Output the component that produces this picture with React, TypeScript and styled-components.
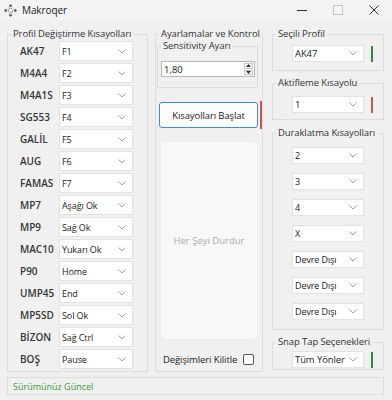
import styled, { createGlobalStyle } from "styled-components";

const GlobalStyle = createGlobalStyle`
  html, body {
    margin: 0;
    padding: 0;
    background: #f0f0f0;
  }
  body {
    font-family: "Open Sans", "Noto Sans", sans-serif;
    color: #222;
  }
`;

const Window = styled.div`
  width: 392px;
  height: 400px;
  background: #f0f0f0;
  overflow: hidden;
`;

const TitleBar = styled.div`
  height: 20px;
  display: flex;
  align-items: center;
  background: #f3f3f3;
  padding-left: 4px;
`;

const AppTitle = styled.span`
  margin-left: 5px;
  font-size: 10px;
  letter-spacing: -0.1px;
  color: #222;
`;

const Controls = styled.div`
  margin-left: auto;
  display: flex;
  align-items: center;
`;

const ControlButton = styled.div`
  width: 36px;
  height: 20px;
  display: flex;
  align-items: center;
  justify-content: center;
`;

const Main = styled.div`
  display: flex;
  align-items: flex-start;
  padding: 8px 0 0 7px;
`;

const Group = styled.fieldset<{ $w: number; $h?: number; $mt?: number; $ml?: number }>`
  box-sizing: border-box;
  width: ${({ $w }) => $w}px;
  ${({ $h }) => ($h ? `height: ${$h}px;` : "")}
  margin: ${({ $mt }) => $mt ?? 0}px 0 0 ${({ $ml }) => $ml ?? 0}px;
  padding: 0;
  border: 1px solid #dcdcdc;
  min-inline-size: 0;
`;

const Caption = styled.legend`
  margin-left: 3px;
  padding: 0 2px;
  font-size: 9.5px;
  letter-spacing: -0.1px;
  line-height: 12px;
  color: #333;
  white-space: nowrap;
`;

const Body = styled.div<{ $p: string }>`
  padding: ${({ $p }) => $p};
  display: flex;
  flex-direction: column;
`;

const ProfileRows = styled.div`
  display: flex;
  flex-direction: column;
  gap: 2px;
`;

const Row = styled.div`
  display: grid;
  grid-template-columns: 39px 74px;
  align-items: center;
  height: 20px;
`;

const WeaponLabel = styled.span`
  font-size: 10px;
  font-weight: 600;
  color: #363636;
  white-space: nowrap;
`;

const ComboBox = styled.div<{ $w: number; $h: number; $fs: number }>`
  box-sizing: border-box;
  width: ${({ $w }) => $w}px;
  height: ${({ $h }) => $h}px;
  background: #fff;
  border: 1px solid #e2e2e2;
  display: flex;
  align-items: center;
  padding: 0 6px 0 2px;
  font-size: ${({ $fs }) => $fs}px;
  letter-spacing: -0.1px;
  color: #222;
`;

const ComboValue = styled.span`
  flex: 1;
  white-space: nowrap;
  overflow: hidden;
`;

const Chevron = () => (
  <svg width="8" height="5" viewBox="0 0 8 5">
    <polyline points="0.5,0.5 4,4 7.5,0.5" fill="none" stroke="#9a9a9a" strokeWidth="0.9" />
  </svg>
);

function Combo({ value, w, h, fs = 9 }: { value: string; w: number; h: number; fs?: number }) {
  return (
    <ComboBox $w={w} $h={h} $fs={fs}>
      <ComboValue>{value}</ComboValue>
      <Chevron />
    </ComboBox>
  );
}

const NumericBox = styled.div`
  box-sizing: border-box;
  width: 94px;
  height: 16px;
  background: #fff;
  border: 1px solid #b9b9b9;
  display: flex;
  align-items: center;
  padding: 0 1px 0 2px;
  font-size: 9.5px;
`;

const Spinner = styled.div`
  width: 9px;
  height: 12px;
  display: flex;
  flex-direction: column;
  gap: 1px;
`;

const SpinPart = styled.div`
  flex: 1;
  border: 1px solid #c8c8c8;
  display: flex;
  align-items: center;
  justify-content: center;
`;

const ActionRow = styled.div`
  display: flex;
  align-items: center;
  gap: 2px;
  margin: 13px 0 0 2px;
`;

const StartButton = styled.div`
  box-sizing: border-box;
  width: 100px;
  height: 26px;
  border: 1px solid #3d8fc6;
  border-radius: 3px;
  background: #fcfcfc;
  display: flex;
  align-items: center;
  justify-content: center;
  font-size: 9.5px;
  letter-spacing: -0.1px;
  color: #222;
`;

const Indicator = styled.div<{ $color: string; $h: number }>`
  width: 2px;
  height: ${({ $h }) => $h}px;
  background: ${({ $color }) => $color};
`;

const StopButton = styled.div`
  box-sizing: border-box;
  width: 98px;
  height: 199px;
  margin: 12px 0 0 3px;
  border-radius: 4px;
  background: #f8f8f8;
  border: 1px solid #ededed;
  display: flex;
  align-items: center;
  justify-content: center;
  font-size: 9.5px;
  color: #acacac;
`;

const LockRow = styled.div`
  display: flex;
  align-items: center;
  height: 14px;
  margin: 12px 0 0 6px;
  font-size: 9.5px;
  letter-spacing: -0.1px;
  color: #222;
`;

const CheckBox = styled.span`
  box-sizing: border-box;
  width: 11px;
  height: 11px;
  margin-left: 6px;
  border: 1px solid #555;
  border-radius: 2px;
  background: #fff;
`;

const RightColumn = styled.div`
  display: flex;
  flex-direction: column;
  margin-left: 9px;
`;

const IndicatorRow = styled.div`
  display: flex;
  align-items: center;
  gap: 7px;
`;

const StackList = styled.div`
  display: flex;
  flex-direction: column;
  gap: 9px;
`;

const Footer = styled.div`
  box-sizing: border-box;
  width: 377px;
  height: 18px;
  margin: 5px 0 0 7px;
  border: 1px solid #dcdcdc;
  display: flex;
  align-items: center;
  padding-left: 5px;
  font-size: 9px;
  color: #3a9a3a;
`;

const profiles: [string, string][] = [
  ["AK47", "F1"],
  ["M4A4", "F2"],
  ["M4A1S", "F3"],
  ["SG553", "F4"],
  ["GALİL", "F5"],
  ["AUG", "F6"],
  ["FAMAS", "F7"],
  ["MP7", "Aşağı Ok"],
  ["MP9", "Sağ Ok"],
  ["MAC10", "Yukarı Ok"],
  ["P90", "Home"],
  ["UMP45", "End"],
  ["MP5SD", "Sol Ok"],
  ["BİZON", "Sağ Ctrl"],
  ["BOŞ", "Pause"],
];

const pauseKeys = ["2", "3", "4", "X", "Devre Dışı", "Devre Dışı", "Devre Dışı"];

const AppIcon = () => (
  <svg width="13" height="13" viewBox="0 0 13 13">
    <polygon points="6.5,0 8.5,2.5 4.5,2.5" fill="#444" />
    <polygon points="6.5,13 8.5,10.5 4.5,10.5" fill="#444" />
    <polygon points="0,6.5 2.5,4.5 2.5,8.5" fill="#444" />
    <polygon points="13,6.5 10.5,4.5 10.5,8.5" fill="#444" />
    <circle cx="6.5" cy="6.5" r="2.4" fill="none" stroke="#555" strokeWidth="1" strokeDasharray="1.2 1" />
  </svg>
);

export default function App() {
  return (
    <Window>
      <GlobalStyle />
      <TitleBar>
        <AppIcon />
        <AppTitle>Makroqer</AppTitle>
        <Controls>
          <ControlButton>
            <svg width="10" height="10" viewBox="0 0 10 10">
              <line x1="0" y1="5.5" x2="10" y2="5.5" stroke="#333" strokeWidth="1" />
            </svg>
          </ControlButton>
          <ControlButton>
            <svg width="10" height="10" viewBox="0 0 10 10">
              <rect x="0.5" y="0.5" width="9" height="9" fill="none" stroke="#c4c4c4" strokeWidth="1" />
            </svg>
          </ControlButton>
          <ControlButton>
            <svg width="10" height="10" viewBox="0 0 10 10">
              <path d="M0.5 0.5 L9.5 9.5 M9.5 0.5 L0.5 9.5" stroke="#333" strokeWidth="1" />
            </svg>
          </ControlButton>
        </Controls>
      </TitleBar>

      <Main>
        <Group $w={141} $h={344}>
          <Caption>Profil Değiştirme Kısayolları</Caption>
          <Body $p="1px 0 0 12px">
            <ProfileRows>
              {profiles.map(([name, key]) => (
                <Row key={name}>
                  <WeaponLabel>{name}</WeaponLabel>
                  <Combo value={key} w={74} h={20} />
                </Row>
              ))}
            </ProfileRows>
          </Body>
        </Group>

        <Group $w={108} $h={344} $ml={7}>
          <Caption>Ayarlamalar ve Kontrol</Caption>
          <Body $p="0 0 0 1px">
            <Group $w={101}>
              <Caption>Sensitivity Ayarı</Caption>
              <Body $p="9px 0 10px 3px">
                <NumericBox>
                  <ComboValue>1,80</ComboValue>
                  <Spinner>
                    <SpinPart>
                      <svg width="5" height="3" viewBox="0 0 5 3">
                        <polygon points="2.5,0 5,3 0,3" fill="#333" />
                      </svg>
                    </SpinPart>
                    <SpinPart>
                      <svg width="5" height="3" viewBox="0 0 5 3">
                        <polygon points="0,0 5,0 2.5,3" fill="#333" />
                      </svg>
                    </SpinPart>
                  </Spinner>
                </NumericBox>
              </Body>
            </Group>
            <ActionRow>
              <StartButton>Kısayolları Başlat</StartButton>
              <Indicator $color="#c75454" $h={28} />
            </ActionRow>
            <StopButton>Her Şeyi Durdur</StopButton>
            <LockRow>
              Değişimleri Kilitle
              <CheckBox />
            </LockRow>
          </Body>
        </Group>

        <RightColumn>
          <Group $w={112}>
            <Caption>Seçili Profil</Caption>
            <Body $p="5px 0 8px 19px">
              <IndicatorRow>
                <Combo value="AK47" w={72} h={17} fs={9.5} />
                <Indicator $color="#2b8a3e" $h={16} />
              </IndicatorRow>
            </Body>
          </Group>
          <Group $w={112} $mt={6}>
            <Caption>Aktifleme Kısayolu</Caption>
            <Body $p="7px 0 6px 19px">
              <IndicatorRow>
                <Combo value="1" w={72} h={17} fs={9.5} />
                <Indicator $color="#c75454" $h={16} />
              </IndicatorRow>
            </Body>
          </Group>
          <Group $w={112} $mt={7}>
            <Caption>Duraklatma Kısayolları</Caption>
            <Body $p="8px 0 9px 19px">
              <StackList>
                {pauseKeys.map((k, i) => (
                  <Combo key={i} value={k} w={72} h={17} />
                ))}
              </StackList>
            </Body>
          </Group>
          <Group $w={112} $mt={6}>
            <Caption>Snap Tap Seçenekleri</Caption>
            <Body $p="3px 0 1px 19px">
              <IndicatorRow>
                <Combo value="Tüm Yönler" w={72} h={17} fs={9.5} />
                <Indicator $color="#2b8a3e" $h={16} />
              </IndicatorRow>
            </Body>
          </Group>
        </RightColumn>
      </Main>

      <Footer>Sürümünüz Güncel</Footer>
    </Window>
  );
}
